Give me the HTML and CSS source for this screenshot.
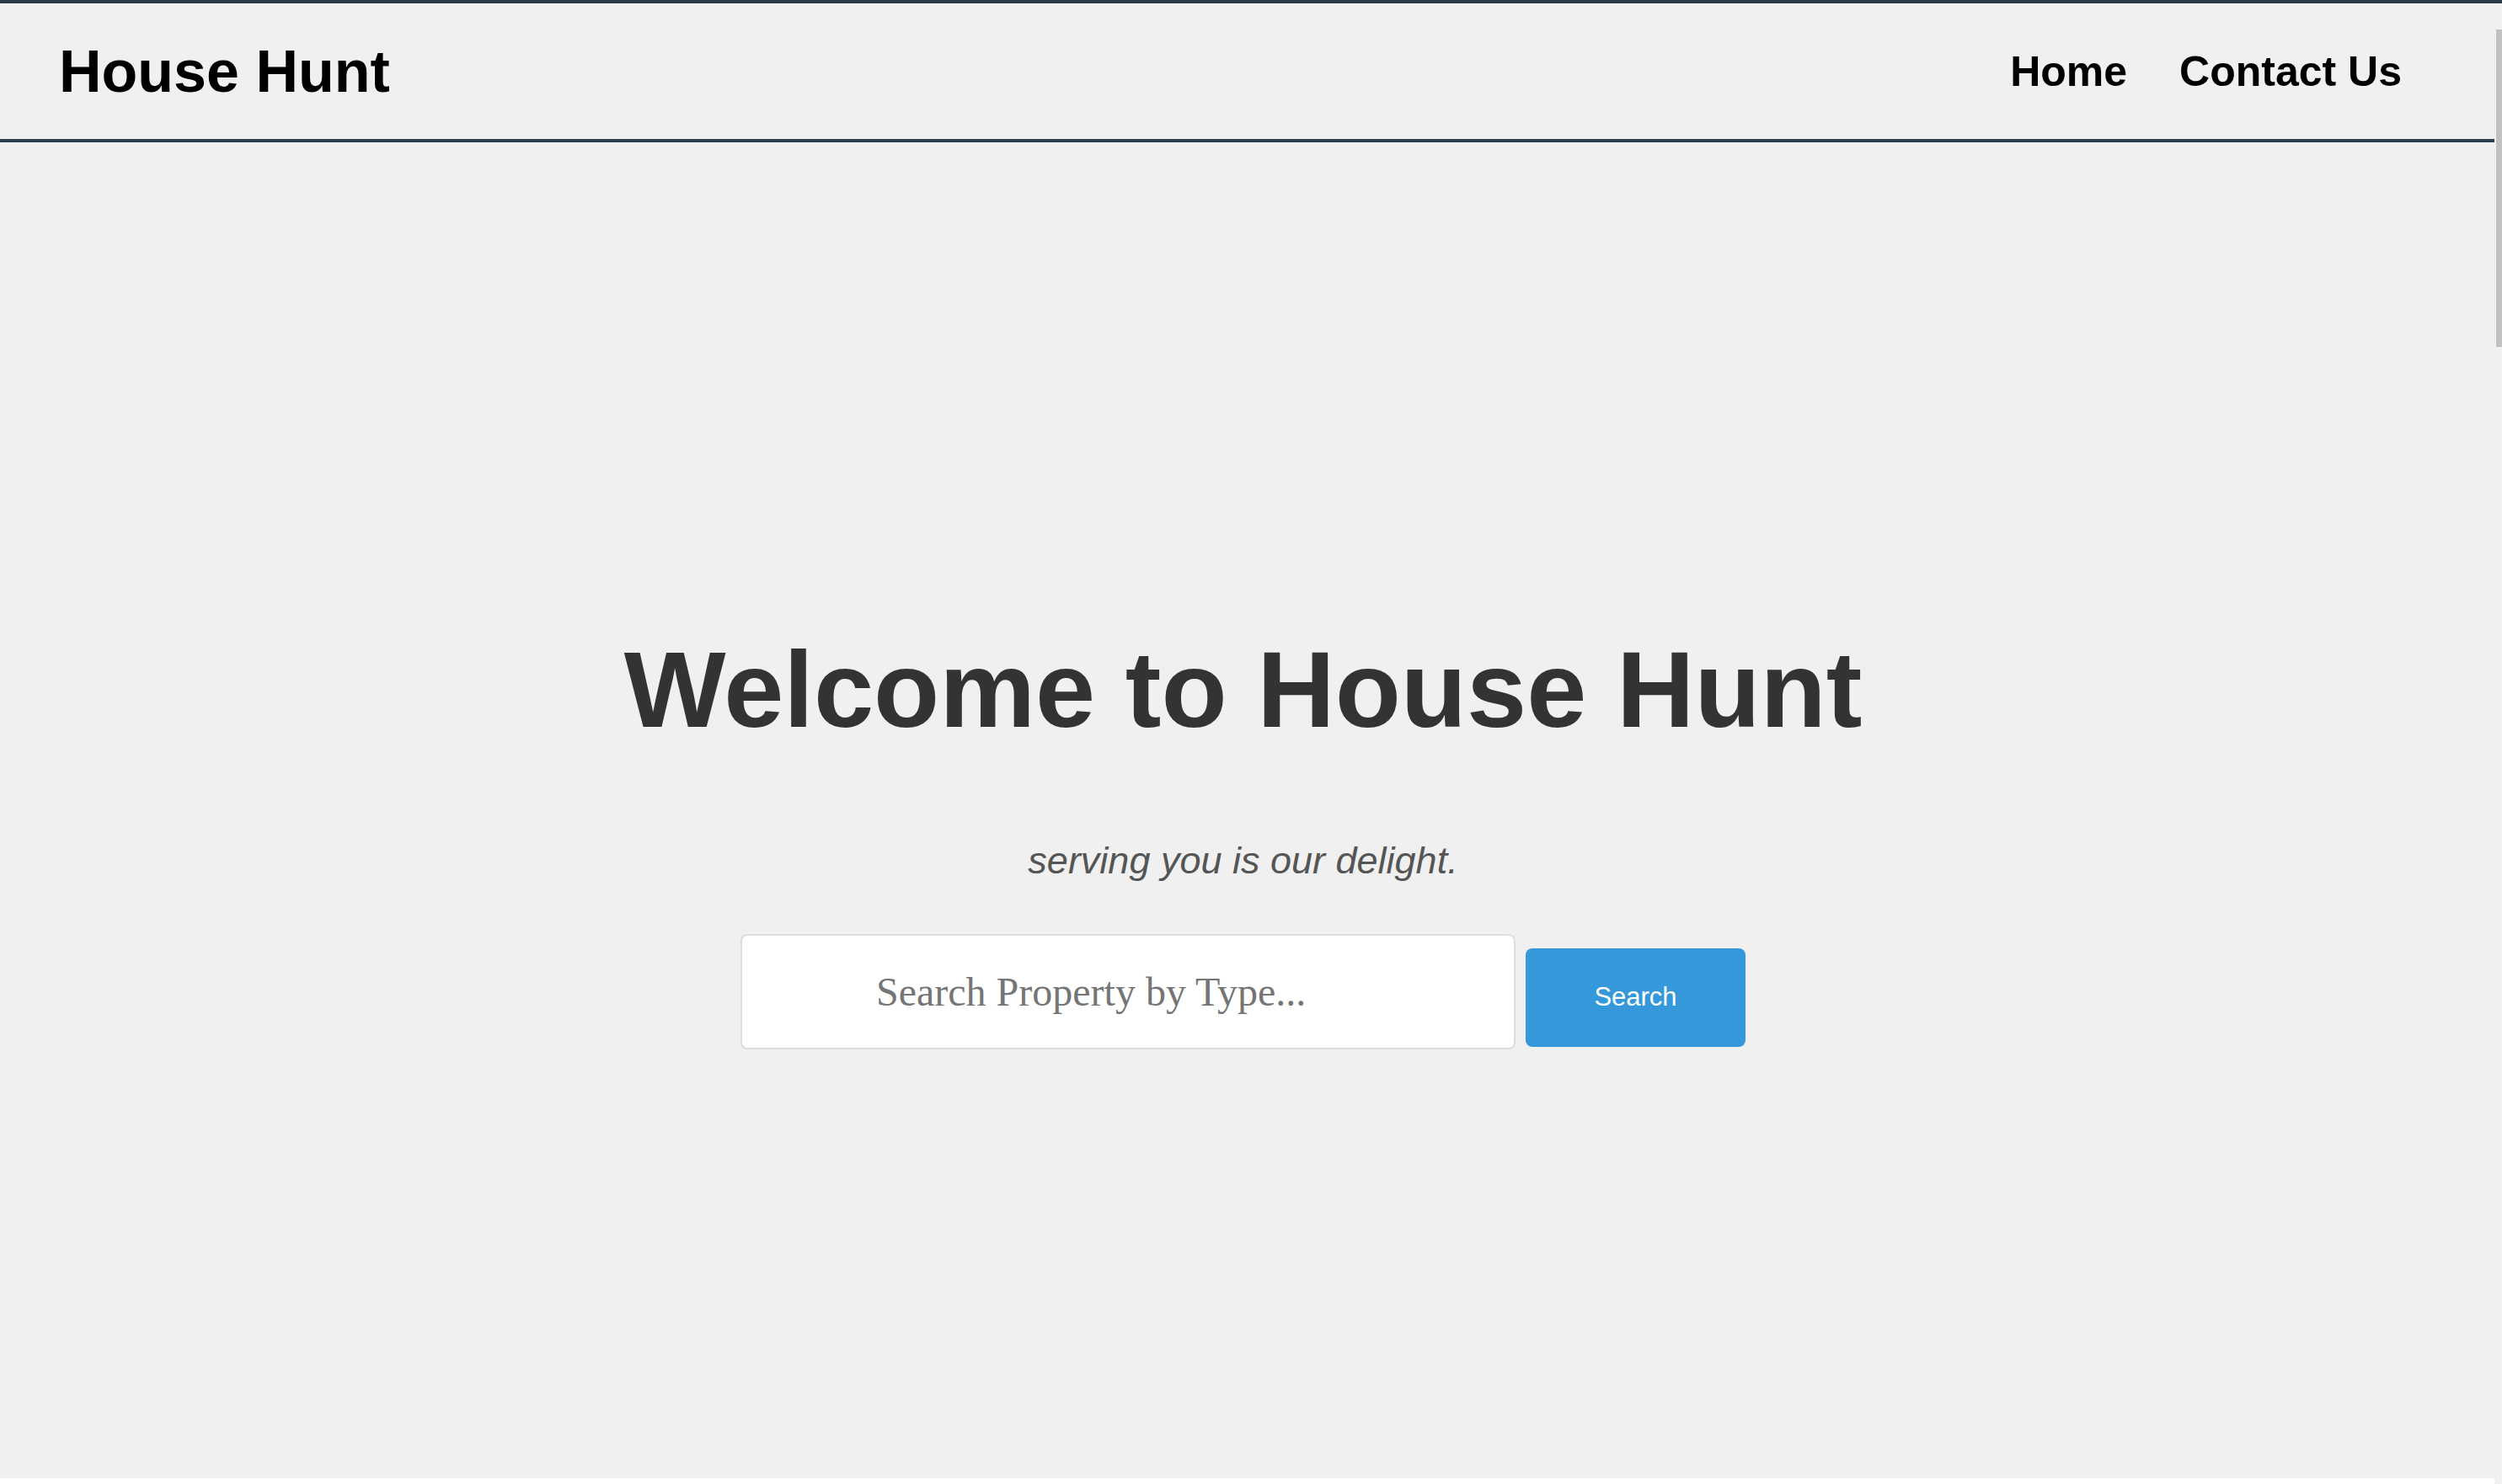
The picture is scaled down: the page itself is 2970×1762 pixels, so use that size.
FILE: index.html
```html
<!DOCTYPE html>
<html lang="en">
<head>
<meta charset="utf-8">
<title>House Hunt</title>
<link rel="stylesheet" href="styles.css">
</head>
<body>
<header class="site-header">
  <div class="logo">House Hunt</div>
  <nav class="nav">
    <a href="#" class="nav-link">Home</a>
    <a href="#" class="nav-link">Contact Us</a>
  </nav>
</header>
<main>
  <section class="hero">
    <h1 class="hero-title">Welcome to House Hunt</h1>
    <p class="hero-sub">serving you is our delight.</p>
    <form class="search" onsubmit="return false">
      <input class="search-input" type="text" placeholder="Search Property by Type...">
      <button class="search-btn" type="submit">Search</button>
    </form>
  </section>
  <section class="listings"></section>
</main>
<div class="scrollbar" aria-hidden="true"><div class="scrollbar-thumb"></div></div>
</body>
</html>
```
FILE: styles.css
```css
html {
  background: #f0f0f0;
  border-top: 4px solid #2c3a46;
}
body {
  margin: 0;
  padding-right: 9px;
  background: #f0f0f0;
  font-family: "Liberation Sans", Arial, sans-serif;
}
.site-header {
  display: flex;
  align-items: center;
  justify-content: space-between;
  height: 165px;
  box-sizing: border-box;
  padding: 0 110px 0 70px;
  border-bottom: 4px solid #2c3e50;
}
.logo {
  font-size: 70px;
  font-weight: bold;
  color: #000;
}
.nav {
  display: flex;
  gap: 62px;
}
.nav-link {
  font-size: 50px;
  font-weight: bold;
  color: #000;
  text-decoration: none;
}
.hero {
  height: 1586px;
  box-sizing: border-box;
  padding: 576px 10px 0 0;
  display: flex;
  flex-direction: column;
  align-items: center;
}
.hero-title {
  margin: 0;
  font-size: 128px;
  font-weight: bold;
  color: #333;
  line-height: normal;
}
.hero-sub {
  margin: 104px 0 0;
  font-size: 45px;
  font-style: italic;
  color: #555;
}
.search {
  margin-top: 61px;
  display: flex;
  align-items: baseline;
  gap: 12px;
}
.search-input {
  width: 920px;
  height: 137px;
  box-sizing: border-box;
  border: 2px solid #ddd;
  border-radius: 8px;
  background: #fff;
  padding: 0 20px 0 159px;
  font-family: "Liberation Serif", "Times New Roman", serif;
  font-size: 48px;
  color: #333;
  outline: none;
}
.search-input::placeholder {
  color: #757575;
}
.search-btn {
  width: 261px;
  height: 117px;
  border: none;
  border-radius: 8px;
  background: #3498db;
  color: #fff;
  font-family: "Liberation Sans", Arial, sans-serif;
  font-size: 31px;
  cursor: pointer;
}
.listings {
  height: 300px;
  background: #fff;
}
.scrollbar {
  position: fixed;
  top: 4px;
  right: 0;
  bottom: 0;
  width: 9px;
  background: #f1f1f1;
}
.scrollbar-thumb {
  position: absolute;
  top: 31px;
  right: 0;
  width: 7px;
  height: 377px;
  background: #c1c1c1;
}
```
